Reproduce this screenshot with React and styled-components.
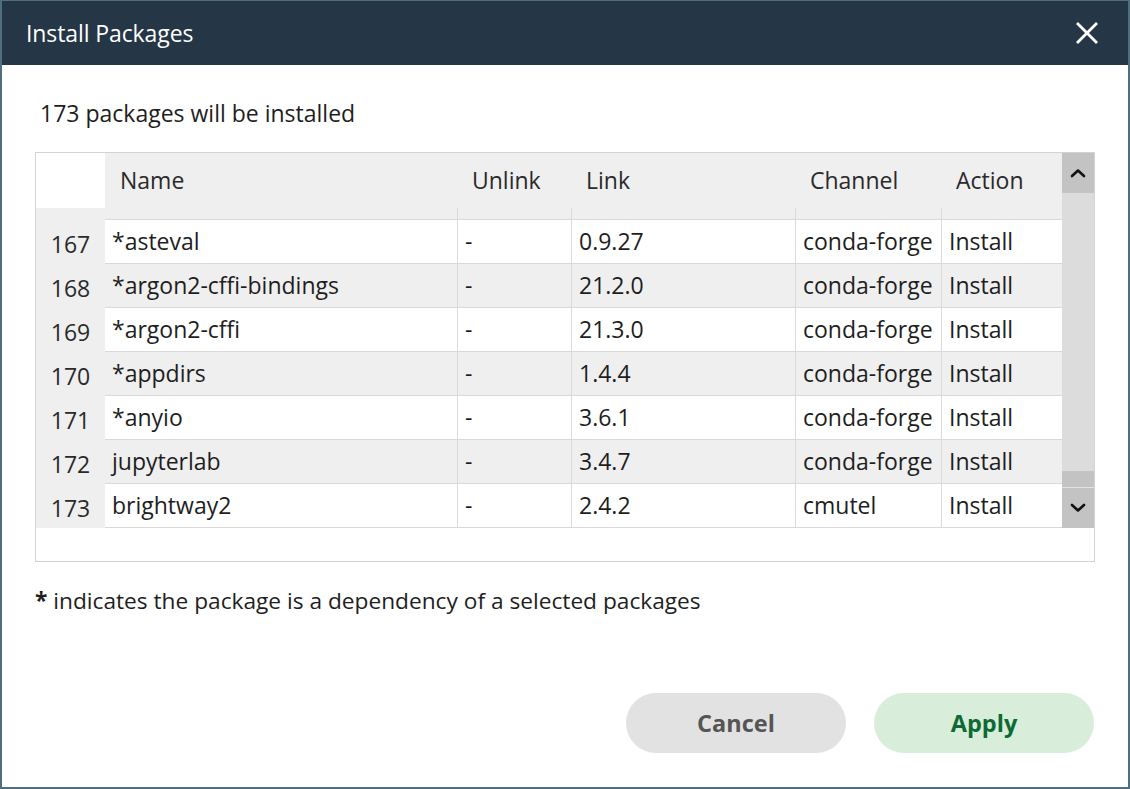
import React from "react";
import styled, { createGlobalStyle } from "styled-components";

const GlobalStyle = createGlobalStyle`
  html, body { margin: 0; padding: 0; background: #ffffff; }
  body { font-family: "Open Sans", "Noto Sans", "DejaVu Sans", sans-serif; color: #1e1e1e; }
  * { box-sizing: border-box; }
`;

const Window = styled.div`
  width: 1130px;
  height: 789px;
  display: flex;
  flex-direction: column;
  border-style: solid;
  border-color: #4f6e80;
  border-width: 1px 2px 2px 2px;
  background: #ffffff;
  overflow: hidden;
`;

const TitleBar = styled.div`
  height: 64px;
  flex: none;
  background: #253646;
  display: flex;
  align-items: center;
  justify-content: space-between;
  padding: 0 28px 0 24px;
`;

const Title = styled.div`
  color: #ffffff;
  font-size: 23px;
  font-weight: 400;
  letter-spacing: -0.1px;
  padding-bottom: 1px;
`;

const CloseButton = styled.button`
  border: none;
  background: transparent;
  padding: 0;
  width: 26px;
  height: 26px;
  display: flex;
  align-items: center;
  justify-content: center;
  cursor: pointer;
`;

const Body = styled.div`
  flex: 1;
  display: flex;
  flex-direction: column;
  padding: 33px 33px 0 33px;
`;

const Summary = styled.div`
  font-size: 23px;
  line-height: 30px;
  padding-left: 5px;
  color: #1e1e1e;
`;

const Frame = styled.div`
  margin-top: 24px;
  height: 410px;
  border: 1px solid #d3d3d3;
  display: flex;
  flex-direction: column;
  background: #ffffff;
`;

const FrameTop = styled.div`
  height: 375px;
  display: flex;
`;

const Grid = styled.div`
  flex: 1;
  display: flex;
  flex-direction: column;
  overflow: hidden;
`;

const cols = "69px 352px 114px 224px 146px 121px";

const HeaderRow = styled.div`
  height: 55px;
  display: grid;
  grid-template-columns: ${cols};
  background: #efefef;
`;

const Corner = styled.div`
  background: #ffffff;
`;

const HeaderCell = styled.div`
  display: flex;
  align-items: center;
  padding-left: 15px;
  padding-bottom: 2px;
  font-size: 23px;
  color: #2a2a2a;
  white-space: nowrap;
`;

const Row = styled.div`
  height: ${(p) => p.$h}px;
  display: grid;
  grid-template-columns: ${cols};
  background: ${(p) => (p.$alt ? "#efefef" : "#ffffff")};
  flex: none;
`;

const NumCell = styled.div`
  background: #efefef;
  display: flex;
  align-items: center;
  justify-content: center;
  padding-top: 4px;
  font-size: 23px;
  color: #2a2a2a;
  overflow: hidden;
`;

const Cell = styled.div`
  display: flex;
  align-items: center;
  padding-left: 7px;
  padding-bottom: 2px;
  font-size: 23px;
  color: #1e1e1e;
  white-space: nowrap;
  overflow: hidden;
  border-bottom: 1px solid #d9d9d9;
  border-left: ${(p) => (p.$first ? "none" : "1px solid #d9d9d9")};
`;

const Scrollbar = styled.div`
  width: 32px;
  flex: none;
  display: flex;
  flex-direction: column;
  background: #dcdcdc;
`;

const ScrollButton = styled.div`
  height: 40px;
  flex: none;
  background: #c3c3c3;
  display: flex;
  align-items: center;
  justify-content: center;
`;

const Track = styled.div`
  flex: 1;
  display: flex;
  flex-direction: column;
  justify-content: flex-end;
`;

const Thumb = styled.div`
  height: 17px;
  background: #c3c3c3;
  border-bottom: 1px solid #e2e2e2;
`;

const Note = styled.div`
  margin-top: 24px;
  font-size: 22.7px;
  line-height: 30px;
  color: #1e1e1e;
  white-space: nowrap;
  b { font-weight: 700; }
`;

const Actions = styled.div`
  margin-top: 77px;
  display: flex;
  justify-content: flex-end;
  gap: 28px;
  padding-right: 1px;
`;

const PillButton = styled.button`
  width: 220px;
  height: 60px;
  border: none;
  border-radius: 30px;
  font-family: inherit;
  font-size: 23.5px;
  font-weight: 700;
  cursor: pointer;
  background: ${(p) => (p.$primary ? "#d8eedb" : "#e2e2e2")};
  color: ${(p) => (p.$primary ? "#0d6a34" : "#555555")};
`;

const rows = [
  { n: 167, name: "*asteval", unlink: "-", link: "0.9.27", channel: "conda-forge", action: "Install" },
  { n: 168, name: "*argon2-cffi-bindings", unlink: "-", link: "21.2.0", channel: "conda-forge", action: "Install" },
  { n: 169, name: "*argon2-cffi", unlink: "-", link: "21.3.0", channel: "conda-forge", action: "Install" },
  { n: 170, name: "*appdirs", unlink: "-", link: "1.4.4", channel: "conda-forge", action: "Install" },
  { n: 171, name: "*anyio", unlink: "-", link: "3.6.1", channel: "conda-forge", action: "Install" },
  { n: 172, name: "jupyterlab", unlink: "-", link: "3.4.7", channel: "conda-forge", action: "Install" },
  { n: 173, name: "brightway2", unlink: "-", link: "2.4.2", channel: "cmutel", action: "Install" },
];

const Chevron = ({ up }) => (
  <svg width="16" height="10" viewBox="0 0 16 10" fill="none">
    <path
      d={up ? "M2 8 L8 2.5 L14 8" : "M2 2 L8 7.5 L14 2"}
      stroke="#111"
      strokeWidth="2.6"
      strokeLinecap="round"
      strokeLinejoin="round"
    />
  </svg>
);

export default function App() {
  return (
    <>
      <GlobalStyle />
      <Window>
        <TitleBar>
          <Title>Install Packages</Title>
          <CloseButton aria-label="Close">
            <svg width="24" height="24" viewBox="0 0 24 24">
              <path d="M2 2 L22 22 M22 2 L2 22" stroke="#ffffff" strokeWidth="2.8" />
            </svg>
          </CloseButton>
        </TitleBar>
        <Body>
          <Summary>173 packages will be installed</Summary>
          <Frame>
            <FrameTop>
              <Grid>
                <HeaderRow>
                  <Corner />
                  <HeaderCell>Name</HeaderCell>
                  <HeaderCell>Unlink</HeaderCell>
                  <HeaderCell>Link</HeaderCell>
                  <HeaderCell>Channel</HeaderCell>
                  <HeaderCell>Action</HeaderCell>
                </HeaderRow>
                <Row $h={12} $alt>
                  <NumCell />
                  <Cell $first />
                  <Cell />
                  <Cell />
                  <Cell />
                  <Cell />
                </Row>
                {rows.map((r, i) => (
                  <Row key={r.n} $h={44} $alt={i % 2 === 1}>
                    <NumCell>{r.n}</NumCell>
                    <Cell $first>{r.name}</Cell>
                    <Cell>{r.unlink}</Cell>
                    <Cell>{r.link}</Cell>
                    <Cell>{r.channel}</Cell>
                    <Cell>{r.action}</Cell>
                  </Row>
                ))}
              </Grid>
              <Scrollbar>
                <ScrollButton>
                  <Chevron up />
                </ScrollButton>
                <Track>
                  <Thumb />
                </Track>
                <ScrollButton>
                  <Chevron />
                </ScrollButton>
              </Scrollbar>
            </FrameTop>
          </Frame>
          <Note>
            <b>*</b> indicates the package is a dependency of a selected packages
          </Note>
          <Actions>
            <PillButton>Cancel</PillButton>
            <PillButton $primary>Apply</PillButton>
          </Actions>
        </Body>
      </Window>
    </>
  );
}
